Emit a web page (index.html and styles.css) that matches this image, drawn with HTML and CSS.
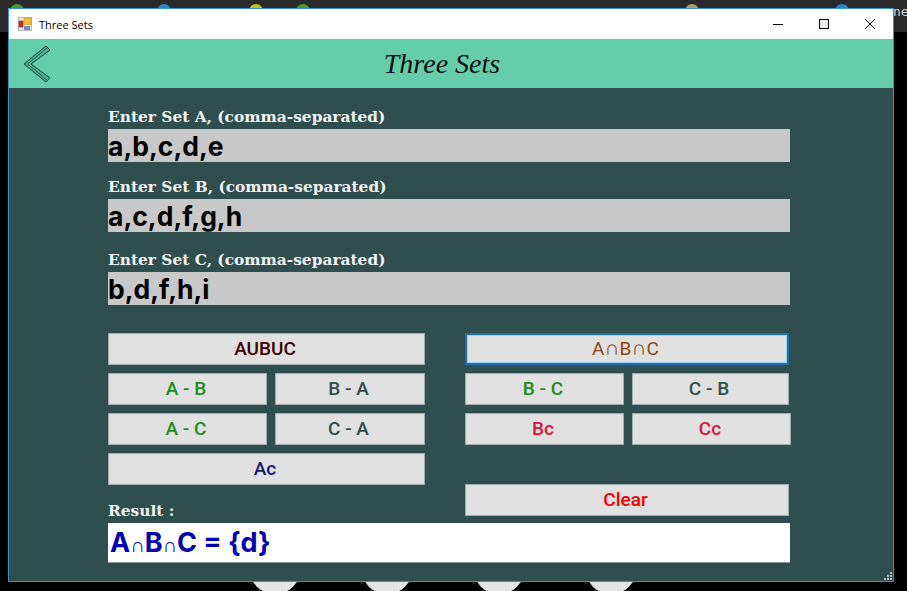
FILE: index.html
```html
<!DOCTYPE html>
<html lang="en">
<head>
    <meta charset="UTF-8">
    <title>Three Sets</title>
    <link rel="stylesheet" href="styles.css">
</head>
<body>
    <!-- desktop behind the window -->
    <div class="taskbar"></div>
    <span class="peek peek-green" style="left: 10px"></span>
    <span class="peek peek-blue" style="left: 157px"></span>
    <span class="peek peek-yellow" style="left: 249px"></span>
    <span class="peek peek-green" style="left: 296px"></span>
    <span class="peek peek-tan" style="left: 685px"></span>
    <span class="peek peek-blue" style="left: 835px"></span>
    <span class="desk-text">ne</span>
    <span class="dock-icon" style="left: 249px"></span>
    <span class="dock-icon" style="left: 361px"></span>
    <span class="dock-icon" style="left: 473px"></span>
    <span class="dock-icon" style="left: 585px"></span>

    <div class="window">
        <div class="titlebar">
            <svg class="app-icon" width="14" height="14" viewBox="0 0 14 14">
                <rect x="0.5" y="0.5" width="13" height="13" fill="#e8e8e8" stroke="#b5b5b5"/>
                <rect x="6" y="1" width="7" height="6.5" fill="#f2c230" stroke="#c8951a" stroke-width="0.6"/>
                <rect x="1" y="4" width="4" height="6" fill="#c8303a" stroke="#8c1f28" stroke-width="0.6"/>
                <rect x="6" y="9" width="6" height="4" fill="#6d8fd0"/>
            </svg>
            <span class="titlebar-text">Three Sets</span>
            <div class="window-buttons">
                <svg width="10" height="10" viewBox="0 0 10 10"><path d="M0 5.5H10" stroke="#000" fill="none"/></svg>
                <svg width="10" height="10" viewBox="0 0 10 10"><rect x="0.5" y="0.5" width="9" height="9" stroke="#000" fill="none"/></svg>
                <svg width="10" height="10" viewBox="0 0 10 10"><path d="M0 0L10 10M10 0L0 10" stroke="#000" fill="none"/></svg>
            </div>
        </div>

        <header class="app-header">
            <svg class="back" width="28" height="38" viewBox="0 0 28 38">
                <path d="M23 1L27 5L8 19L27 33L23 37L1 19Z" fill="#4fb597" stroke="#173f38" stroke-width="1"/>
                <path d="M24 3L4.500 19L24 35" fill="none" stroke="#173f38" stroke-width="0.8"/>
            </svg>
            <h1>Three Sets</h1>
        </header>

        <main class="content">
            <label class="set-label">Enter Set A, (comma-separated)</label>
            <div class="set-input">a,b,c,d,e</div>

            <label class="set-label label-b">Enter Set B, (comma-separated)</label>
            <div class="set-input">a,c,d,f,g,h</div>

            <label class="set-label label-c">Enter Set C, (comma-separated)</label>
            <div class="set-input">b,d,f,h,i</div>

            <div class="ops">
                <div class="ops-col">
                    <button class="maroon">AUBUC</button>
                    <div class="pair left-pair">
                        <button class="green">A - B</button>
                        <button class="slate">B - A</button>
                    </div>
                    <div class="pair left-pair">
                        <button class="green">A - C</button>
                        <button class="slate">C - A</button>
                    </div>
                    <button class="navy">Ac</button>
                    <div class="set-label result-label">Result :</div>
                </div>
                <div class="ops-col">
                    <button class="brown focused">A<span class="btn-cap">∩</span>B<span class="btn-cap">∩</span>C</button>
                    <div class="pair right-pair">
                        <button class="green">B - C</button>
                        <button class="slate">C - B</button>
                    </div>
                    <div class="pair right-pair wide-last">
                        <button class="crimson">Bc</button>
                        <button class="crimson">Cc</button>
                    </div>
                    <button class="red clear">Clear</button>
                </div>
            </div>

            <div class="result">A<span class="cap">∩</span>B<span class="cap">∩</span>C = {d}</div>
        </main>

        <svg class="grip" width="8" height="8" viewBox="0 0 8 8" fill="#b8c4c4">
            <rect x="6" y="0" width="2" height="2"/>
            <rect x="3" y="3" width="2" height="2"/>
            <rect x="6" y="3" width="2" height="2"/>
            <rect x="0" y="6" width="2" height="2"/>
            <rect x="3" y="6" width="2" height="2"/>
            <rect x="6" y="6" width="2" height="2"/>
        </svg>
    </div>
</body>
</html>
```

FILE: styles.css
```css
/* Desktop */
html, body {
    margin: 0;
    padding: 0;
    height: 100%;
    overflow: hidden;
}

body {
    position: relative;
    background: #000;
    font-family: "Liberation Sans", sans-serif;
}

.taskbar {
    height: 32px;
    background: #2a2a2a;
}

.peek {
    position: absolute;
    top: 4px;
    width: 14px;
    height: 14px;
    border-radius: 50%;
}

.peek-green { background: #4c9a2a; }
.peek-blue { background: #2a86c8; }
.peek-yellow { background: #c8c020; }
.peek-tan { background: #b09a70; }

.desk-text {
    position: absolute;
    left: 893px;
    top: 4px;
    color: #d0d0d0;
    font: 13px "DejaVu Sans Mono", monospace;
}

.dock-icon {
    position: absolute;
    top: 542px;
    width: 52px;
    height: 52px;
    border-radius: 50%;
    background: #e4e4e4;
}

/* Window */
.window {
    position: absolute;
    left: 8px;
    top: 8px;
    width: 884px;
    height: 572px;
    border: 1px solid #3b8ed0;
    display: flex;
    flex-direction: column;
    background: #2f4f4f;
}

.titlebar {
    height: 30px;
    flex: none;
    background: #fff;
    display: flex;
    align-items: center;
    padding-left: 9px;
    font-family: "Open Sans", sans-serif;
    font-size: 11px;
    color: #000;
}

.app-icon {
    margin-right: 7px;
}

.window-buttons {
    margin-left: auto;
    display: flex;
    gap: 36px;
    padding-right: 18px;
}

.app-header {
    height: 49px;
    flex: none;
    background: #66cdaa;
    display: flex;
    align-items: center;
    justify-content: center;
    position: relative;
    padding-right: 18px;
}

.back {
    position: absolute;
    left: 14px;
    top: 6px;
}

h1 {
    margin: 0;
    font-family: "Liberation Serif", serif;
    font-style: italic;
    font-weight: normal;
    font-size: 28px;
    color: #111;
}

.content {
    padding: 19px 103px 0 99px;
}

.set-label {
    display: block;
    height: 22px;
    line-height: 20px;
    font-family: "DejaVu Serif", serif;
    font-weight: bold;
    font-size: 15.400px;
    color: #f2f2f2;
    white-space: nowrap;
}

.label-b {
    margin-top: 15px;
}

.label-c {
    margin-top: 18px;
}

.set-input {
    height: 33px;
    line-height: 34px;
    background: #c8c8c8;
    font-family: Inter, sans-serif;
    font-weight: 700;
    font-size: 26.500px;
    color: #000;
    white-space: nowrap;
}

.ops {
    display: grid;
    grid-template-columns: 317px 324px;
    column-gap: 40px;
    margin-top: 28px;
}

.ops-col {
    display: flex;
    flex-direction: column;
    gap: 8px;
}

.pair {
    display: grid;
    column-gap: 8px;
}

.left-pair {
    grid-template-columns: 159px 150px;
}

.right-pair {
    grid-template-columns: 159px 157px;
}

.wide-last {
    grid-template-columns: 159px 159px;
    width: 326px;
}

button {
    height: 32px;
    margin: 0;
    padding: 0 3px 0 0;
    background: #e0e0e0;
    border: 1px solid #a3acac;
    font-family: Roboto, sans-serif;
    font-weight: 500;
    font-size: 19px;
    line-height: 28px;
}

.focused {
    border: 2px solid #1f6fb0;
    box-shadow: inset 0 0 0 1px #9fd4f5;
    font-weight: 400;
}

.btn-cap {
    font-size: 21px;
    line-height: 20px;
}

.clear {
    margin-top: 31px;
}

.maroon { color: #3f0000; }
.green { color: #228b22; }
.slate { color: #2f4f4f; }
.navy { color: #191970; }
.brown { color: #8b4513; }
.crimson { color: #dc143c; }
.red { color: #f00000; }

.result-label {
    margin-top: 8px;
}

.result {
    height: 40px;
    line-height: 39px;
    box-sizing: border-box;
    background: #fff;
    border-bottom: 1px solid #8a9696;
    padding-left: 2px;
    font-family: Inter, sans-serif;
    font-weight: 700;
    font-size: 27px;
    color: #0000b4;
    white-space: nowrap;
}

.cap {
    font-size: 20px;
    font-weight: 700;
}

.grip {
    position: absolute;
    right: 1px;
    bottom: 1px;
}
```
